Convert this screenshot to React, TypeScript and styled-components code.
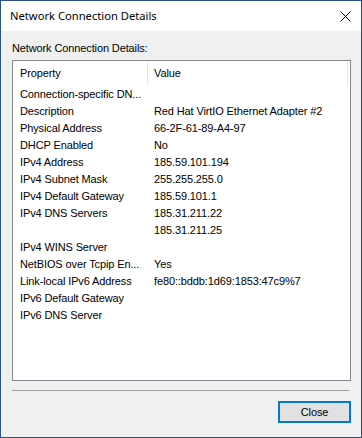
import React from "react";
import styled, { createGlobalStyle } from "styled-components";

const Global = createGlobalStyle`
  html, body { margin: 0; padding: 0; background: #f0f0f0; }
  * { box-sizing: border-box; }
`;

const Window = styled.div`
  width: 362px;
  height: 438px;
  border: 1px solid #2a5384;
  background: #f0f0f0;
  display: flex;
  flex-direction: column;
  font-family: "Liberation Sans", Arial, sans-serif;
  font-size: 11px;
  letter-spacing: -0.12px;
  color: #000;
  overflow: hidden;
`;

const TitleBar = styled.div`
  height: 30px;
  flex: none;
  background: #fff;
  display: flex;
  align-items: center;
  justify-content: space-between;
  padding: 0 10px 1px 9px;
`;

const Title = styled.span`
  font-family: "Noto Sans", "Open Sans", sans-serif;
  font-size: 11.2px;
  letter-spacing: 0;
  color: #000;
`;

const CloseGlyph = styled.svg`
  width: 11px;
  height: 11px;
  margin-top: 1px;
`;

const Body = styled.div`
  flex: 1;
  display: flex;
  flex-direction: column;
  padding: 11px 10px 0 11px;
`;

const Label = styled.div`
  height: 13px;
  line-height: 13px;
  margin-bottom: 5px;
`;

const ListBox = styled.div`
  height: 321px;
  border: 1px solid #828790;
  background: #fff;
  display: flex;
  flex-direction: column;
`;

const HeaderRow = styled.div`
  height: 25px;
  display: grid;
  grid-template-columns: 135px 200px;
  flex: none;
`;

const HeaderCell = styled.div<{ $pad: number }>`
  padding-left: ${(p) => p.$pad}px;
  border-right: 1px solid #e5e5e5;
  height: 24px;
  line-height: 24px;
`;

const Rows = styled.div`
  display: flex;
  flex-direction: column;
`;

const Row = styled.div`
  height: 17px;
  display: grid;
  grid-template-columns: 135px 1fr;
  line-height: 17px;
  white-space: nowrap;
`;

const Cell = styled.div<{ $pad: number }>`
  padding-left: ${(p) => p.$pad}px;
  overflow: hidden;
`;

const Separator = styled.div`
  height: 1px;
  width: 337px;
  margin-top: 9px;
  background: #a0a0a0;
`;

const ButtonRow = styled.div`
  display: flex;
  justify-content: flex-end;
  margin-top: 10px;
`;

const Button = styled.button`
  width: 73px;
  height: 22px;
  border: 2px solid #0078d7;
  background: #e1e1e1;
  font-family: "Liberation Sans", Arial, sans-serif;
  font-size: 11px;
  letter-spacing: -0.12px;
  color: #000;
  padding: 0;
  margin: 0;
  line-height: 16px;
`;

const rows: [string, string][] = [
  ["Connection-specific DN...", ""],
  ["Description", "Red Hat VirtIO Ethernet Adapter #2"],
  ["Physical Address", "66-2F-61-89-A4-97"],
  ["DHCP Enabled", "No"],
  ["IPv4 Address", "185.59.101.194"],
  ["IPv4 Subnet Mask", "255.255.255.0"],
  ["IPv4 Default Gateway", "185.59.101.1"],
  ["IPv4 DNS Servers", "185.31.211.22"],
  ["", "185.31.211.25"],
  ["IPv4 WINS Server", ""],
  ["NetBIOS over Tcpip En...", "Yes"],
  ["Link-local IPv6 Address", "fe80::bddb:1d69:1853:47c9%7"],
  ["IPv6 Default Gateway", ""],
  ["IPv6 DNS Server", ""],
];

export default function App() {
  return (
    <>
      <Global />
      <Window>
        <TitleBar>
          <Title>Network Connection Details</Title>
          <CloseGlyph viewBox="0 0 11 11">
            <path d="M0.5 0.5 L10.5 10.5 M10.5 0.5 L0.5 10.5" stroke="#000" strokeWidth="1" fill="none" />
          </CloseGlyph>
        </TitleBar>
        <Body>
          <Label>Network Connection Details:</Label>
          <ListBox>
            <HeaderRow>
              <HeaderCell $pad={7}>Property</HeaderCell>
              <HeaderCell $pad={6}>Value</HeaderCell>
            </HeaderRow>
            <Rows>
              {rows.map(([k, v], i) => (
                <Row key={i}>
                  <Cell $pad={7}>{k}</Cell>
                  <Cell $pad={6}>{v}</Cell>
                </Row>
              ))}
            </Rows>
          </ListBox>
          <Separator />
          <ButtonRow>
            <Button>Close</Button>
          </ButtonRow>
        </Body>
      </Window>
    </>
  );
}
